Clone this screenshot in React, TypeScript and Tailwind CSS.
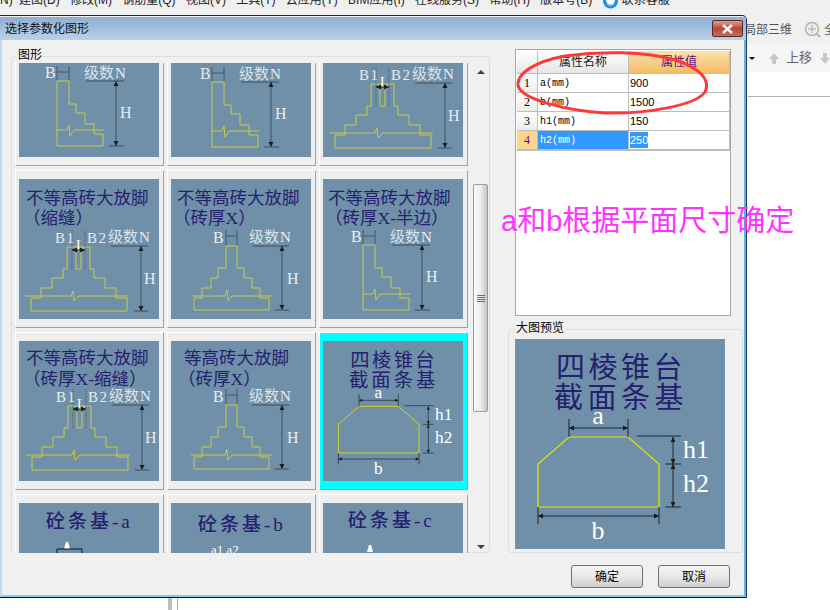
import React from 'react'

const CJK = '"Liberation Serif", "Noto Sans CJK SC", serif'
const NAVY = '#25206f'
const LINE = '#c9c94a'

// arrowhead pair along a vertical dimension line
function VArrow({ x, y1, y2, color = '#3f4f5c', width = 1 }: { x: number; y1: number; y2: number; color?: string; width?: number }) {
    return (
        <g>
            <line x1={x} y1={y1} x2={x} y2={y2} stroke={color} strokeWidth={width} />
            <polygon points={`${x - 2.5},${y1 + 5} ${x + 2.5},${y1 + 5} ${x},${y1}`} fill="#1c1c1c" />
            <polygon points={`${x - 2.5},${y2 - 5} ${x + 2.5},${y2 - 5} ${x},${y2}`} fill="#1c1c1c" />
        </g>
    )
}

function HArrow({ y, x1, x2, color = '#3f4f5c', width = 1 }: { y: number; x1: number; x2: number; color?: string; width?: number }) {
    return (
        <g>
            <line x1={x1} y1={y} x2={x2} y2={y} stroke={color} strokeWidth={width} />
            <polygon points={`${x1 + 5},${y - 2.5} ${x1 + 5},${y + 2.5} ${x1},${y}`} fill="#1c1c1c" />
            <polygon points={`${x2 - 5},${y - 2.5} ${x2 - 5},${y + 2.5} ${x2},${y}`} fill="#1c1c1c" />
        </g>
    )
}

function Title({ lines }: { lines: { text: string; x: number; y: number; spacing?: number; size?: number; weight?: number }[] }) {
    return (
        <>
            {lines.map((l) => (
                <text
                    key={l.text}
                    x={l.x}
                    y={l.y}
                    fontSize={l.size ?? 17.5}
                    fontWeight={l.weight ?? 400}
                    letterSpacing={l.spacing ?? 0}
                    fill={NAVY}
                    fontFamily={CJK}
                >
                    {l.text}
                </text>
            ))}
        </>
    )
}

function Levels({ x, y }: { x: number; y: number }) {
    return (
        <g>
            <text x={x} y={y} fontSize={15} fill="#dde3e8" fontFamily={CJK}>
                级数
            </text>
            <text x={x + 31} y={y} fontSize={15} fill="#e8edf0" fontFamily={CJK}>
                N
            </text>
        </g>
    )
}

function Half({ dx = 0, dy = 0 }: { dx?: number; dy?: number }) {
    return (
        <g transform={`translate(${dx} ${dy})`}>
            <polygon
                points="40,66 52,66 52,89 59,89 59,98 68,98 68,109 77,109 77,119 86,119 86,131 40,131"
                fill="none"
                stroke={LINE}
                strokeWidth={1}
            />
            <polyline points="40,115 50,115 52,110 53,121 57,115 87,115" fill="none" stroke={LINE} strokeWidth={1} />
            <text x={28} y={63} fontSize={16} fill="#e8edf0" fontFamily={CJK}>
                B
            </text>
            <path d="M40 51V65M52 51V65M40 57H52" stroke="#45586a" fill="none" />
            <Levels x={67} y={63} />
            <line x1={69} y1={66} x2={107} y2={66} stroke="#3f4f5c" />
            <VArrow x={99} y1={66} y2={131} />
            <line x1={92} y1={131} x2={107} y2={131} stroke="#3f4f5c" />
            <text x={103} y={103} fontSize={16} fill="#e8edf0" fontFamily={CJK}>
                H
            </text>
        </g>
    )
}

function Full({ dy = 0 }: { dy?: number }) {
    return (
        <g transform={`translate(0 ${dy})`}>
            <polygon
                points="55,67 66,67 66,89 73,89 73,99 81,99 81,109 89,109 89,119 98,119 98,131 23,131 23,119 31,119 31,109 40,109 40,99 47,99 47,89 55,89"
                fill="none"
                stroke={LINE}
            />
            <polyline points="20,117 54,117 56,111 57,122 61,117 101,117" fill="none" stroke={LINE} />
            <text x={42} y={64} fontSize={16} fill="#e8edf0" fontFamily={CJK}>
                B
            </text>
            <path d="M55 51V66M66 51V66M55 57H66" stroke="#45586a" fill="none" />
            <Levels x={78} y={63} />
            <line x1={81} y1={67} x2={118} y2={67} stroke="#3f4f5c" />
            <VArrow x={111} y1={67} y2={131} />
            <line x1={104} y1={131} x2={118} y2={131} stroke="#3f4f5c" />
            <text x={116} y={105} fontSize={16} fill="#e8edf0" fontFamily={CJK}>
                H
            </text>
        </g>
    )
}

function Seam({ dx = 0, dy = 0 }: { dx?: number; dy?: number }) {
    return (
        <g transform={`translate(${dx} ${dy})`}>
            <polygon
                points="48,68 71,68 71,90 75,90 75,99 86,99 86,109 97,109 97,119 108,119 108,132 12,132 12,119 22,119 22,109 33,109 33,99 44,99 44,90 48,90"
                fill="none"
                stroke={LINE}
            />
            <polyline points="57,68 57,90 62,90 62,68" fill="none" stroke={LINE} />
            <polyline points="6,117 52,117 54,112 55,122 60,117 110,117" fill="none" stroke={LINE} />
            <path d="M53 51V90M66 51V90" stroke="#45586a" strokeDasharray="1 1" fill="none" />
            <text x={36} y={64} fontSize={15} letterSpacing={1.5} fill="#e8edf0" fontFamily={CJK}>
                B1
            </text>
            <text x={68} y={64} fontSize={15} letterSpacing={1.5} fill="#e8edf0" fontFamily={CJK}>
                B2
            </text>
            <text x={57} y={71} fontSize={14} fill="#ffffff" fontFamily={CJK}>
                L
            </text>
            <HArrow y={71} x1={53} x2={66} color="#1c1c1c" />
            <Levels x={89} y={63} />
            <line x1={92} y1={67} x2={129} y2={67} stroke="#3f4f5c" />
            <VArrow x={122} y1={67} y2={132} />
            <line x1={115} y1={132} x2={129} y2={132} stroke="#3f4f5c" />
            <text x={125} y={105} fontSize={16} fill="#e8edf0" fontFamily={CJK}>
                H
            </text>
        </g>
    )
}

// drawn once in the large preview's 210 units, the thumbnail just scales it
function Trapezoid() {
    return (
        <g>
            <Title
                lines={[
                    { text: '四棱锥台', x: 41, y: 39, size: 29, spacing: 3.5 },
                    { text: '截面条基', x: 39, y: 69, size: 29, spacing: 4.5 },
                ]}
            />
            <polygon points="54,98 113,98 144,125 144,168 23,168 23,125" fill="none" stroke="#e8e400" strokeWidth={1.2} />
            <path d="M54 80V98M113 80V98M122 97H166M150 125H166M150 168H166M23 168V185M144 168V185" stroke="#1d2730" fill="none" />
            <HArrow y={89} x1={54} x2={113} color="#1d2730" />
            <VArrow x={158} y1={98} y2={125} color="#1d2730" />
            <VArrow x={158} y1={125} y2={168} color="#1d2730" />
            <HArrow y={177} x1={23} x2={144} color="#1d2730" />
            <g fill="#ffffff" fontFamily={CJK} fontSize={26}>
                <text x={83} y={85} textAnchor="middle">a</text>
                <text x={168} y={119}>h1</text>
                <text x={168} y={153}>h2</text>
                <text x={83} y={200} textAnchor="middle">b</text>
            </g>
        </g>
    )
}

function Cone({ x, y }: { x: number; y: number }) {
    return <polygon points={`${x},${y} ${x + 2},${y} ${x + 4},${y + 7} ${x - 2},${y + 7}`} fill="#ffffff" />
}

const THUMBS: { key: string; selected?: boolean; body: React.ReactNode }[] = [
    { key: 'a1', body: <Half dx={-2} dy={-2} /> },
    { key: 'a2', body: <Half dx={1} dy={-1} /> },
    { key: 'a3', body: <Seam dx={0} dy={-1} /> },
    {
        key: 'b1',
        body: (
            <>
                <Title lines={[{ text: '不等高砖大放脚', x: 7, y: 25 }, { text: '（缩缝）', x: 4, y: 45 }]} />
                <Seam />
            </>
        ),
    },
    {
        key: 'b2',
        body: (
            <>
                <Title lines={[{ text: '不等高砖大放脚', x: 6, y: 25 }, { text: '（砖厚X）', x: 2, y: 45 }]} />
                <Full />
            </>
        ),
    },
    {
        key: 'b3',
        body: (
            <>
                <Title lines={[{ text: '不等高砖大放脚', x: 5, y: 25 }, { text: '（砖厚X-半边）', x: 2, y: 45 }]} />
                <Half />
            </>
        ),
    },
    {
        key: 'c1',
        body: (
            <>
                <Title lines={[{ text: '不等高砖大放脚', x: 7, y: 23 }, { text: '（砖厚X-缩缝）', x: 4, y: 44 }]} />
                <Seam dx={1} dy={-3} />
            </>
        ),
    },
    {
        key: 'c2',
        body: (
            <>
                <Title lines={[{ text: '等高砖大放脚', x: 13, y: 23 }, { text: '（砖厚X）', x: 7, y: 44 }]} />
                <Full dy={-3} />
            </>
        ),
    },
    {
        key: 'c3',
        selected: true,
        body: (
            <svg x={0} y={0} width={140} height={140} viewBox="0 0 210 210">
                <Trapezoid />
            </svg>
        ),
    },
    {
        key: 'd1',
        body: (
            <>
                <Title lines={[{ text: '砼条基-a', x: 27, y: 25, size: 19, spacing: 3, weight: 500 }]} />
                <Cone x={47} y={39} />
                <path d="M38 46V50M63 46V50M38 46H63" stroke="#111" fill="none" />
            </>
        ),
    },
    {
        key: 'd2',
        body: (
            <>
                <Title lines={[{ text: '砼条基-b', x: 27, y: 28, size: 19, spacing: 3, weight: 500 }]} />
                <text x={40} y={51} fontSize={13} fill="#ffffff" fontFamily={CJK}>
                    a1 a2
                </text>
            </>
        ),
    },
    {
        key: 'd3',
        body: (
            <>
                <Title lines={[{ text: '砼条基-c', x: 25, y: 24, size: 19, spacing: 3, weight: 500 }]} />
                <Cone x={46} y={42} />
            </>
        ),
    },
]

const ROWS = [
    { n: '1', name: 'a(mm)', value: '900' },
    { n: '2', name: 'b(mm)', value: '1500' },
    { n: '3', name: 'h1(mm)', value: '150' },
    { n: '4', name: 'h2(mm)', value: '250', active: true },
]

const MENU = ['建图(D)', '修改(M)', '钢筋量(Q)', '视图(V)', '工具(T)', '云应用(Y)', 'BIM应用(I)', '在线服务(S)', '帮助(H)', '版本号(B)']

function Scrollbar() {
    return (
        <div className="w-[17px] h-full flex flex-col items-center">
            <div className="mt-[7px] w-0 h-0 border-x-[4px] border-x-transparent border-b-[4px] border-b-[#404040]" />
            <div className="mt-[110px] w-[15px] h-[228px] rounded-[2px] border border-[#9a9a9a] bg-gradient-to-r from-[#fbfbfb] via-[#eeeeee] to-[#c4c4c4] flex flex-col items-center justify-center gap-[1px]">
                <div className="w-[8px] h-[1px] bg-[#707070]" />
                <div className="w-[8px] h-[1px] bg-[#707070]" />
                <div className="w-[8px] h-[1px] bg-[#707070]" />
                <div className="w-[8px] h-[1px] bg-[#707070]" />
            </div>
            <div className="mt-[133px] w-0 h-0 border-x-[4px] border-x-transparent border-t-[4px] border-t-[#404040]" />
        </div>
    )
}

function DialogButton({ label }: { label: string }) {
    return (
        <button className="w-[72px] h-[23px] rounded-[3px] border border-[#707070] bg-gradient-to-b from-[#f3f3f3] via-[#e8e8e8] to-[#cfcfcf] text-[12px] text-black">
            {label}
        </button>
    )
}

export default function App() {
    return (
        <div
            className="relative w-[830px] h-[610px] overflow-hidden bg-white"
            style={{ fontFamily: '"Liberation Sans", "Noto Sans CJK SC", sans-serif' }}
        >
            {/* app chrome behind the dialog */}
            <div className="h-[15px] bg-[#f0f0f0] overflow-hidden">
                <div className="flex items-center -mt-[12px] h-[24px] text-[12px] text-[#222] whitespace-nowrap">
                    <span className="w-[19px]">N)</span>
                    {MENU.map((m) => (
                        <span key={m} className="mr-[10.3px]">{m}</span>
                    ))}
                    <svg width="15" height="18" viewBox="0 0 15 18" className="mr-[4px] mt-[2px]">
                        <circle cx="7.5" cy="9" r="7.5" fill="#1f8fe6" />
                        <circle cx="7.5" cy="8" r="4.5" fill="#ffffff" />
                        <path d="M4 12Q7.5 15 11 12" stroke="#bfe3ff" fill="none" />
                    </svg>
                    <span>联系客服</span>
                </div>
            </div>
            <div className="pl-[744px] h-[29px] bg-[#f0f0f0] flex items-center text-[12px] text-[#555] whitespace-nowrap">
                <span>局部三维</span>
                <div className="w-px h-[16px] bg-[#c8c8c8] ml-[7px] mr-[5px]" />
                <svg width="17" height="17" viewBox="0 0 17 17" className="shrink-0 mr-[3px]">
                    <circle cx="8" cy="8" r="6.5" fill="#ececec" stroke="#b4b4b4" strokeWidth="1.5" />
                    <path d="M8 4V12M4 8H12" stroke="#a6a6a6" />
                    <path d="M13 13L16 16" stroke="#b4b4b4" strokeWidth="2" />
                </svg>
                <span>全</span>
            </div>
            <div className="pl-[748px] h-[28px] bg-[#f5f5f5] flex items-center text-[13px] text-[#666] whitespace-nowrap">
                <div className="ml-[1px] w-0 h-0 border-x-[3px] border-x-transparent border-t-[3px] border-t-black" />
                <div className="w-px h-[16px] bg-[#c8c8c8] ml-[6px] mr-[8px]" />
                <svg width="10" height="11" viewBox="0 0 10 11" className="shrink-0 mr-[7px]">
                    <path d="M5 0L10 6H7V11H3V6H0Z" fill="#c8c8c8" />
                </svg>
                <span className="mr-[8px]">上移</span>
                <svg width="10" height="11" viewBox="0 0 10 11" className="shrink-0">
                    <path d="M5 11L10 5H7V0H3V5H0Z" fill="#c8c8c8" />
                </svg>
            </div>
            <div className="ml-[748px] mt-[24px] h-px bg-[#b0b0b0]" />
            <div className="absolute left-[168px] top-[598px] w-[4px] h-[12px] bg-[#bdbdbd]" />
            <div className="absolute left-[177px] top-[598px] w-px h-[12px] bg-[#b0b0b0]" />

            {/* dialog */}
            <div className="absolute left-0 top-[15px] w-[747px] h-[583px] border-t border-b border-r border-t-[#222] border-b-[#111] border-r-[#1d3f55] rounded-tr-[5px] bg-[#f0f0f0] flex flex-col">
                <div className="mt-[1px] h-[23px] bg-gradient-to-b from-[#8eaed3] to-[#bad1ea] flex items-center pl-[5px] rounded-tr-[4px] relative">
                    <span className="text-[12px] text-[#111]">选择参数化图形</span>
                    <div className="absolute right-[3px] top-[3px] w-[31px] h-[17px] rounded-[2px] border border-[#5a2a26] bg-gradient-to-b from-[#dc9c92] via-[#b8473a] to-[#c96a5a] flex items-center justify-center">
                        <svg width="13" height="10" viewBox="0 0 13 10">
                            <path d="M2 1L11 9M11 1L2 9" stroke="#f4f4f4" strokeWidth="2.6" />
                        </svg>
                    </div>
                </div>
                <div className="flex-1 flex border-l-2 border-r-2 border-l-[#c3dcf5] border-r-[#5fb3e2] border-b-2 border-b-[#8cc8ee] pt-[16px] relative">
                    <div className="ml-[9px] w-[479px] h-[497px] rounded-[3px] border border-[#d6e0e6] relative shrink-0">
                        <span className="absolute left-[5px] -top-[9px] bg-[#f0f0f0] text-[12px] leading-[15px] text-black px-px z-10">图形</span>
                        <div className="mt-[6px] h-[490px] overflow-hidden flex">
                            <div className="w-[460px] pl-[3px] shrink-0">
                                <div className="-mt-[55px] grid grid-cols-[149px_149px_149px] auto-rows-[158px] gap-x-[3px] gap-y-[4px]">
                                    {THUMBS.map((t) => (
                                        <div
                                            key={t.key}
                                            className={
                                                'border border-t-white border-l-white border-r-[#a0a0a0] border-b-[#a0a0a0] pl-[3px] pt-[8px] ' +
                                                (t.selected ? 'bg-[#00ffff]' : 'bg-[#efefef]')
                                            }
                                        >
                                            <svg width="140" height="140" viewBox="0 0 140 140" className="bg-[#6f90a8] block">
                                                {t.body}
                                            </svg>
                                        </div>
                                    ))}
                                </div>
                            </div>
                            <Scrollbar />
                        </div>
                    </div>

                    <div className="ml-[18px] w-[235px] shrink-0 relative">
                        <div className="ml-[7px] w-[216px] h-[267px] -mt-[7px] border border-[#a8a8a8] bg-white p-px relative">
                            <div className="grid grid-cols-[21px_91px_100px] grid-rows-[23px_19px_19px_19px_19px] text-[12px] border-b border-r border-[#bdbdbd] w-[213px]">
                                <div className="bg-gradient-to-b from-white to-[#e6e6e6] border-r border-b border-[#bdbdbd]" />
                                <div className="bg-gradient-to-b from-white to-[#e6e6e6] border-r border-b border-[#bdbdbd] flex items-center justify-center text-[12px] text-[#222]">
                                    属性名称
                                </div>
                                <div className="bg-gradient-to-b from-[#fae2ac] to-[#f2bc63] border-b border-[#bdbdbd] flex items-center justify-center text-[12px] text-[#660a80]">
                                    属性值
                                </div>
                                {ROWS.map((r) => (
                                    <React.Fragment key={r.n}>
                                        <div
                                            className={
                                                'border-r border-b border-[#bdbdbd] flex items-center justify-center ' +
                                                (r.active ? 'bg-[#ffd58c] text-[#660a80]' : 'bg-gradient-to-b from-white to-[#ececec] text-black')
                                            }
                                            style={{ fontFamily: '"Liberation Serif", serif' }}
                                        >
                                            {r.n}
                                        </div>
                                        <div
                                            className={
                                                'border-r border-b border-[#bdbdbd] flex items-center pl-[2px] text-[10px] ' +
                                                (r.active ? 'bg-[#3399ff] text-white' : 'bg-white text-black')
                                            }
                                            style={{ fontFamily: '"Liberation Mono", monospace' }}
                                        >
                                            {r.name}
                                        </div>
                                        <div className="border-b border-[#bdbdbd] flex items-center pl-[1px] text-[11px] text-black bg-white">
                                            <span className={r.active ? 'bg-[#3399ff] text-white' : ''}>{r.value}</span>
                                        </div>
                                    </React.Fragment>
                                ))}
                            </div>
                            {/* hand drawn red ring on the screenshot */}
                            <svg className="absolute left-0 top-0 pointer-events-none" width="216" height="80" viewBox="0 0 216 80">
                                <path
                                    d="M49 6C84 1 129 1 159 10C184 18 195 30 189 42C179 56 129 64 89 63C54 61 4 50 2 35C1 24 17 12 49 6Z"
                                    fill="none"
                                    stroke="#fb3b3b"
                                    strokeWidth="3"
                                />
                            </svg>
                            <span className="absolute -left-[15px] top-[156px] text-[29px] leading-[30px] text-[#ff33ff] whitespace-nowrap">
                                a和b根据平面尺寸确定
                            </span>
                        </div>
                        <div className="mt-[13px] w-[235px] h-[224px] rounded-[3px] border border-[#d6e0e6] relative pl-[6px] pt-[9px]">
                            <span className="absolute left-[6px] -top-[9px] bg-[#f0f0f0] text-[12px] leading-[15px] text-black px-px">大图预览</span>
                            <svg width="210" height="210" viewBox="0 0 210 210" className="bg-[#6f90a8] block">
                                <Trapezoid />
                            </svg>
                        </div>
                    </div>

                    <div className="absolute left-[569px] top-[525px] flex gap-[15px]">
                        <DialogButton label="确定" />
                        <DialogButton label="取消" />
                    </div>
                </div>
            </div>
        </div>
    )
}
